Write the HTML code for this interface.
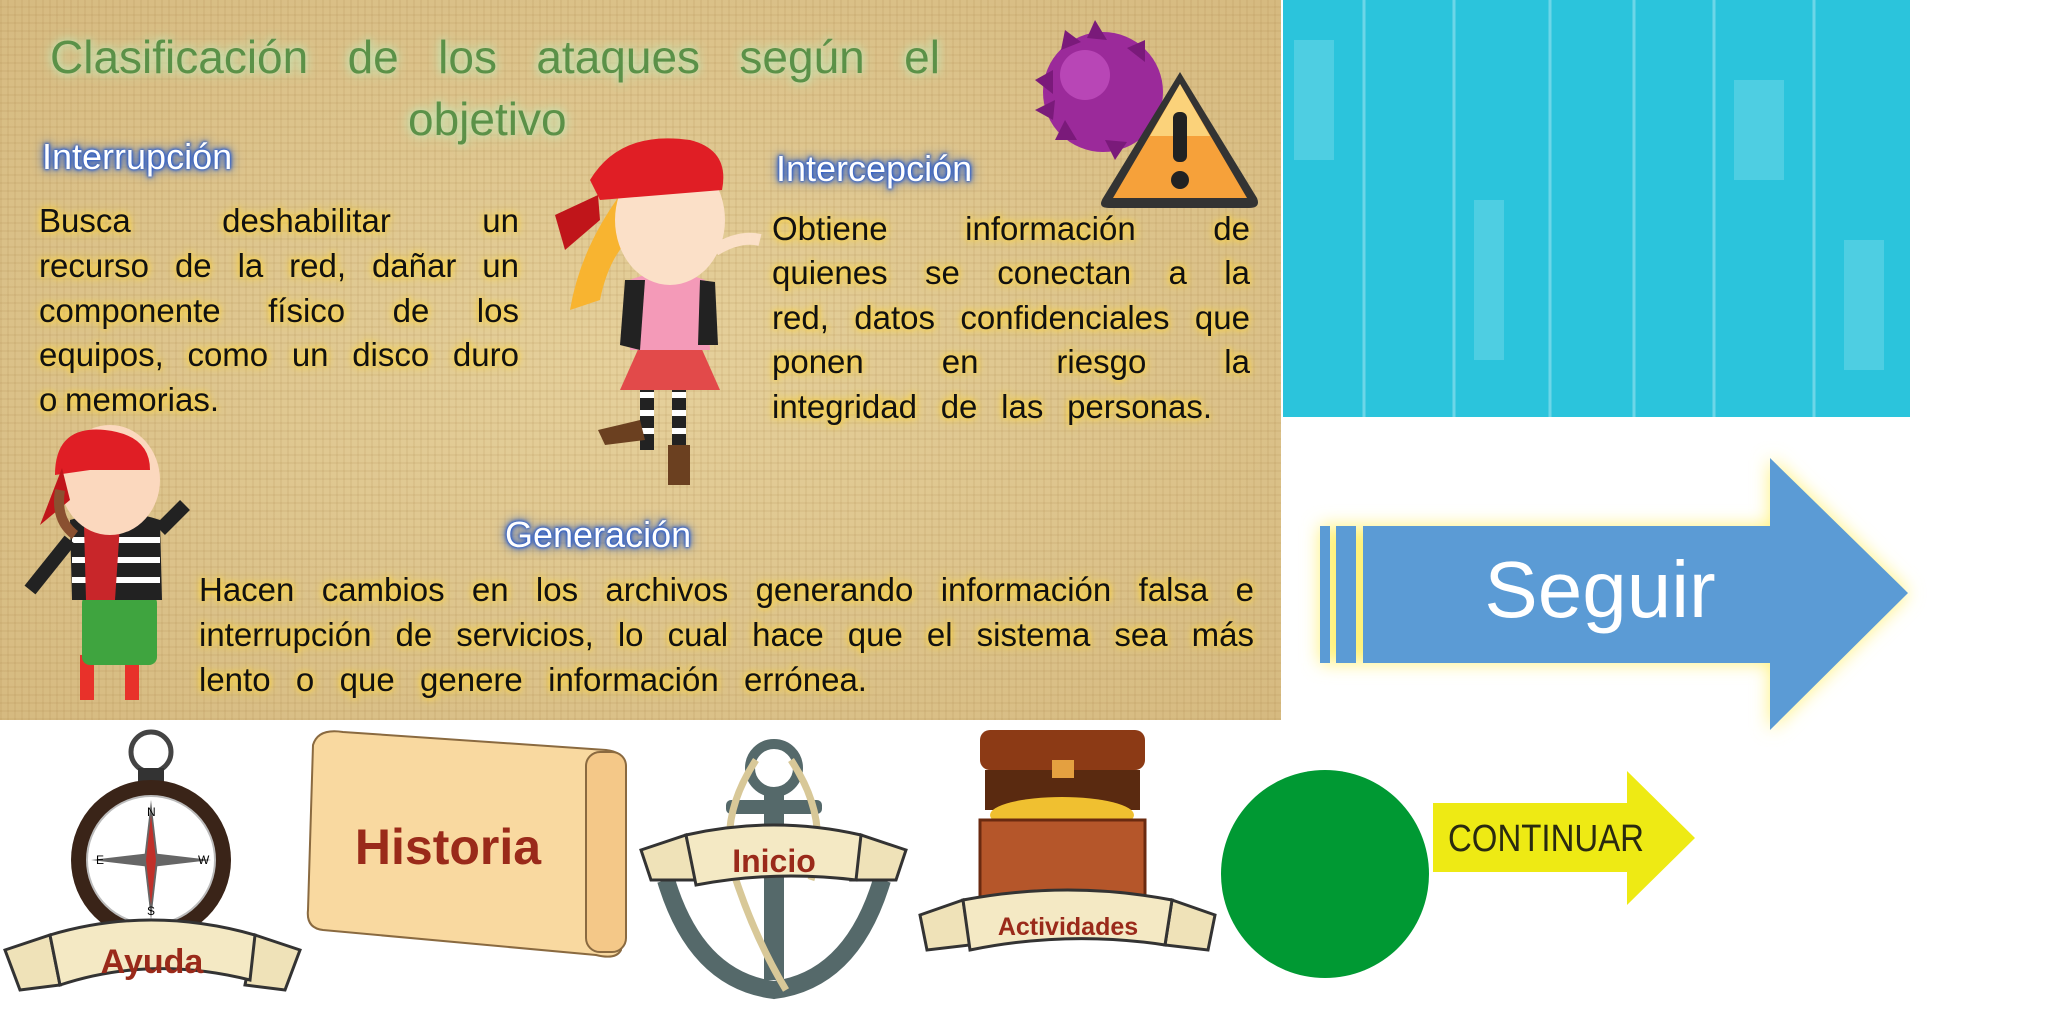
<!DOCTYPE html>
<html><head><meta charset="utf-8">
<style>
*{margin:0;padding:0;box-sizing:border-box}
html,body{width:2048px;height:1024px;overflow:hidden;background:#fff;position:relative;font-family:"Liberation Sans",sans-serif}
.abs{position:absolute}
#parch{left:0;top:0;width:1281px;height:720px;background:#dcc48c;
background-image:repeating-linear-gradient(90deg,rgba(160,120,60,.10) 0 2px,transparent 2px 7px),repeating-linear-gradient(0deg,rgba(160,120,60,.10) 0 2px,transparent 2px 8px),radial-gradient(ellipse at 50% 50%,#e6d19c,#d6ba80);}
.line{position:absolute;display:flex;justify-content:space-between;font-size:33px;color:#111;text-shadow:0 0 6px #ffd53a,0 0 10px #ffd53a;transform-origin:left center;white-space:nowrap}
.title{position:absolute;display:flex;justify-content:space-between;font-size:46px;color:#5b9148;text-shadow:0 0 8px #c4e8b8,0 0 14px #c4e8b8;white-space:nowrap}
.hd{position:absolute;font-size:36px;color:#fff;text-shadow:0 0 2px #2f5fc8,0 0 3px #2f5fc8,0 0 5px #2f5fc8,0 0 8px #3a67c8,0 0 12px #3a67c8;white-space:nowrap}
</style></head><body>
<div id="parch" class="abs"></div>
<div class="title" style="left:50px;top:30px;width:890px"><span>Clasificación</span><span>de</span><span>los</span><span>ataques</span><span>según</span><span>el</span></div>
<div class="title" style="left:408px;top:92px"><span>objetivo</span></div>
<div class="hd" style="left:42px;top:136px">Interrupción</div>
<div class="hd" style="left:776px;top:148px">Intercepción</div>
<div class="hd" style="left:505px;top:514px">Generación</div>

<div class="line" style="left:39px;top:202px;width:480px"><span>Busca</span><span>deshabilitar</span><span>un</span></div>
<div class="line" style="left:39px;top:247px;width:480px"><span>recurso</span><span>de</span><span>la</span><span>red,</span><span>dañar</span><span>un</span></div>
<div class="line" style="left:39px;top:292px;width:480px"><span>componente</span><span>físico</span><span>de</span><span>los</span></div>
<div class="line" style="left:39px;top:336px;width:480px"><span>equipos,</span><span>como</span><span>un</span><span>disco</span><span>duro</span></div>
<div class="line" style="left:39px;top:381px;width:180px"><span>o</span><span>memorias.</span></div>

<div class="line" style="left:772px;top:210px;width:478px"><span>Obtiene</span><span>información</span><span>de</span></div>
<div class="line" style="left:772px;top:254px;width:478px"><span>quienes</span><span>se</span><span>conectan</span><span>a</span><span>la</span></div>
<div class="line" style="left:772px;top:299px;width:478px"><span>red,</span><span>datos</span><span>confidenciales</span><span>que</span></div>
<div class="line" style="left:772px;top:343px;width:478px"><span>ponen</span><span>en</span><span>riesgo</span><span>la</span></div>
<div class="line" style="left:772px;top:388px;width:440px"><span>integridad</span><span>de</span><span>las</span><span>personas.</span></div>

<div class="line" style="left:199px;top:571px;width:1055px"><span>Hacen</span><span>cambios</span><span>en</span><span>los</span><span>archivos</span><span>generando</span><span>información</span><span>falsa</span><span>e</span></div>
<div class="line" style="left:199px;top:616px;width:1055px"><span>interrupción</span><span>de</span><span>servicios,</span><span>lo</span><span>cual</span><span>hace</span><span>que</span><span>el</span><span>sistema</span><span>sea</span><span>más</span></div>
<div class="line" style="left:199px;top:661px;width:668px"><span>lento</span><span>o</span><span>que</span><span>genere</span><span>información</span><span>errónea.</span></div>

<svg class="abs" style="left:0;top:0" width="2048" height="1024" viewBox="0 0 2048 1024">
<defs>
<filter id="glow" x="-20%" y="-20%" width="140%" height="140%"><feGaussianBlur stdDeviation="9"/></filter>
</defs>
<circle cx="1103" cy="92" r="60" fill="#9b2a9a"/>
<circle cx="1085" cy="75" r="25" fill="#c552c2" opacity=".7"/>
<g fill="#7a1a7a"><polygon points="1095,20 1107,40 1087,38"/><polygon points="1035,80 1053,70 1053,94"/><polygon points="1055,140 1065,120 1077,140"/><polygon points="1145,40 1145,62 1127,48"/><polygon points="1035,110 1055,100 1053,120"/><polygon points="1065,30 1081,42 1061,50"/><polygon points="1115,160 1105,140 1127,142"/></g>
<path d="M1180 72 L1257 198 Q1261 208 1249 208 L1109 208 Q1097 208 1103 198 Z" fill="#333"/>
<path d="M1180 84 L1247 198 L1113 198 Z" fill="#f6a13a"/>
<path d="M1180 84 L1210 136 L1150 136 Z" fill="#fbd27a"/>
<rect x="1173" y="112" width="14" height="50" rx="6" fill="#222"/>
<circle cx="1180" cy="180" r="9" fill="#222"/>
<rect x="640" y="380" width="14" height="70" fill="#222"/><rect x="672" y="380" width="14" height="70" fill="#222"/>
<g fill="#fff"><rect x="640" y="392" width="14" height="6"/><rect x="640" y="410" width="14" height="6"/><rect x="640" y="428" width="14" height="6"/><rect x="672" y="392" width="14" height="6"/><rect x="672" y="410" width="14" height="6"/><rect x="672" y="428" width="14" height="6"/></g>
<path d="M598 430 L640 420 L645 440 L605 445Z" fill="#6b4020"/><rect x="668" y="445" width="22" height="40" fill="#6b4020"/>
<path d="M640 345 L700 345 L720 390 L620 390Z" fill="#e24a4a"/>
<path d="M630 280 Q665 265 705 280 L710 350 L630 350Z" fill="#f49ab8"/>
<path d="M625 280 L645 280 L640 350 L620 345Z" fill="#222"/><path d="M700 280 L715 282 L718 345 L698 345Z" fill="#222"/>
<path d="M620 195 Q580 250 570 310 L600 300 Q610 250 640 230Z" fill="#f8b430"/>
<ellipse cx="670" cy="220" rx="55" ry="65" fill="#fbe0c8"/>
<path d="M590 180 Q620 130 690 140 Q730 150 722 190 L600 200Z" fill="#e01e25"/>
<path d="M598 195 L555 215 L565 250 L600 220Z" fill="#c0151a"/>
<path d="M715 250 Q740 235 760 240" stroke="#fbe0c8" stroke-width="12" fill="none"/>
<rect x="80" y="655" width="14" height="45" fill="#e8312a"/><rect x="125" y="655" width="14" height="45" fill="#e8312a"/>
<rect x="82" y="595" width="75" height="70" rx="8" fill="#3fa43f"/>
<path d="M70 520 Q115 505 160 520 L162 600 L72 600Z" fill="#222"/>
<g stroke="#fff" stroke-width="6"><line x1="72" y1="540" x2="160" y2="540"/><line x1="72" y1="560" x2="160" y2="560"/><line x1="72" y1="580" x2="160" y2="580"/></g>
<path d="M84 525 L120 525 L115 600 L86 600Z" fill="#c8262a"/>
<path d="M70 540 L30 590" stroke="#222" stroke-width="14"/><path d="M160 530 L185 505" stroke="#222" stroke-width="14"/>
<ellipse cx="110" cy="480" rx="50" ry="55" fill="#fbd8be"/>
<path d="M55 475 Q55 425 105 430 Q150 435 150 470 L90 470 Z" fill="#e01e25"/>
<path d="M62 468 L40 525 L70 500Z" fill="#c0151a"/>
<path d="M60 490 Q55 520 75 535" stroke="#8a5030" stroke-width="10" fill="none"/>
<rect x="1283" y="0" width="627" height="417" fill="#2bc4dc"/>
<g stroke="#7ddbeb" stroke-width="3" opacity=".8"><line x1="1364" y1="0" x2="1364" y2="417"/><line x1="1454" y1="0" x2="1454" y2="417"/><line x1="1550" y1="0" x2="1550" y2="417"/><line x1="1634" y1="0" x2="1634" y2="417"/><line x1="1714" y1="0" x2="1714" y2="417"/><line x1="1814" y1="0" x2="1814" y2="417"/></g>
<g fill="#8fe2ef" opacity=".35"><rect x="1294" y="40" width="40" height="120"/><rect x="1474" y="200" width="30" height="160"/><rect x="1734" y="80" width="50" height="100"/><rect x="1844" y="240" width="40" height="130"/></g>
<path d="M1320 526 L1770 526 L1770 458 L1908 593 L1770 730 L1770 663 L1320 663Z" fill="#fff27a" filter="url(#glow)"/>
<rect x="1320" y="526" width="10" height="137" fill="#5b9bd5"/>
<rect x="1336" y="526" width="20" height="137" fill="#5b9bd5"/>
<path d="M1363 526 L1770 526 L1770 458 L1908 593 L1770 730 L1770 663 L1363 663Z" fill="#5b9bd5"/>
<text x="1600" y="617" font-size="80" fill="#fff" text-anchor="middle" font-family="Liberation Sans,sans-serif">Seguir</text>
<ellipse cx="1325" cy="874" rx="104" ry="104" fill="#009933"/>
<path d="M1433 803 L1627 803 L1627 771 L1695 838 L1627 905 L1627 872 L1433 872Z" fill="#eeea14"/>
<text x="1448" y="851" font-size="38" fill="#2a2a10" font-family="Liberation Sans,sans-serif" textLength="196" lengthAdjust="spacingAndGlyphs">CONTINUAR</text>
<circle cx="151" cy="752" r="20" fill="none" stroke="#444" stroke-width="5"/>
<rect x="138" y="768" width="26" height="16" fill="#333"/>
<circle cx="151" cy="860" r="80" fill="#3a2418"/>
<circle cx="151" cy="860" r="64" fill="#fff" stroke="#bbb" stroke-width="2"/>
<polygon points="151,800 158,860 151,920 144,860" fill="#666"/>
<polygon points="91,860 151,853 211,860 151,867" fill="#666"/>
<polygon points="151,815 156,860 151,905 146,860" fill="#c0302a"/>
<text x="147" y="816" font-size="12">N</text><text x="147" y="915" font-size="12">S</text><text x="96" y="864" font-size="12">E</text><text x="198" y="864" font-size="12">W</text>
<path d="M5 950 L50 935 L60 985 L20 990Z" fill="#efe2b8" stroke="#333" stroke-width="3"/>
<path d="M300 950 L255 935 L245 985 L285 990Z" fill="#efe2b8" stroke="#333" stroke-width="3"/>
<path d="M50 935 Q150 905 255 935 L250 980 Q150 955 60 985Z" fill="#f4e9c4" stroke="#333" stroke-width="3"/>
<text x="152" y="973" font-size="34" font-weight="bold" fill="#9a2a1a" text-anchor="middle">Ayuda</text>
<path d="M313 745 Q318 728 343 732 L606 750 Q626 752 626 770 L621 950 Q616 960 596 955 L323 930 Q306 928 308 910Z" fill="#f9d9a0" stroke="#8a6a40" stroke-width="2"/>
<rect x="586" y="752" width="40" height="200" rx="14" fill="#f4c888" stroke="#8a6a40" stroke-width="2"/>
<text x="448" y="864" font-size="50" font-weight="bold" fill="#9a2a1a" text-anchor="middle">Historia</text>
<circle cx="774" cy="768" r="24" fill="none" stroke="#55696a" stroke-width="10"/>
<rect x="764" y="790" width="20" height="190" fill="#55696a"/>
<rect x="726" y="800" width="96" height="14" rx="5" fill="#55696a"/>
<path d="M666 880 Q696 980 774 990 Q852 980 882 880" fill="none" stroke="#55696a" stroke-width="18"/>
<path d="M756 760 Q716 820 736 880 Q756 940 786 990" fill="none" stroke="#d8c898" stroke-width="7"/>
<path d="M791 760 Q831 820 811 880" fill="none" stroke="#d8c898" stroke-width="7"/>
<path d="M641 850 L686 835 L696 880 L651 880Z" fill="#efe2b8" stroke="#333" stroke-width="3"/>
<path d="M906 850 L861 835 L851 880 L896 880Z" fill="#efe2b8" stroke="#333" stroke-width="3"/>
<path d="M686 835 Q774 815 861 835 L856 880 Q774 870 696 885Z" fill="#f4e9c4" stroke="#333" stroke-width="3"/>
<text x="774" y="872" font-size="32" font-weight="bold" fill="#9a2a1a" text-anchor="middle">Inicio</text>
<rect x="980" y="730" width="165" height="40" rx="10" fill="#8c3a15"/>
<rect x="985" y="770" width="155" height="40" fill="#5a2a10"/>
<ellipse cx="1062" cy="815" rx="72" ry="18" fill="#f0c030"/>
<rect x="980" y="820" width="165" height="85" fill="#b5562a" stroke="#6a2a10" stroke-width="3"/>
<rect x="1052" y="760" width="22" height="18" fill="#e4a040"/>
<path d="M920 915 L963 900 L970 945 L927 950Z" fill="#efe2b8" stroke="#333" stroke-width="3"/>
<path d="M1215 915 L1172 900 L1165 945 L1208 950Z" fill="#efe2b8" stroke="#333" stroke-width="3"/>
<path d="M963 900 Q1068 880 1172 900 L1165 945 Q1068 930 970 950Z" fill="#f4e9c4" stroke="#333" stroke-width="3"/>
<text x="1068" y="935" font-size="25" font-weight="bold" fill="#9a2a1a" text-anchor="middle">Actividades</text>
</svg>
</body></html>
